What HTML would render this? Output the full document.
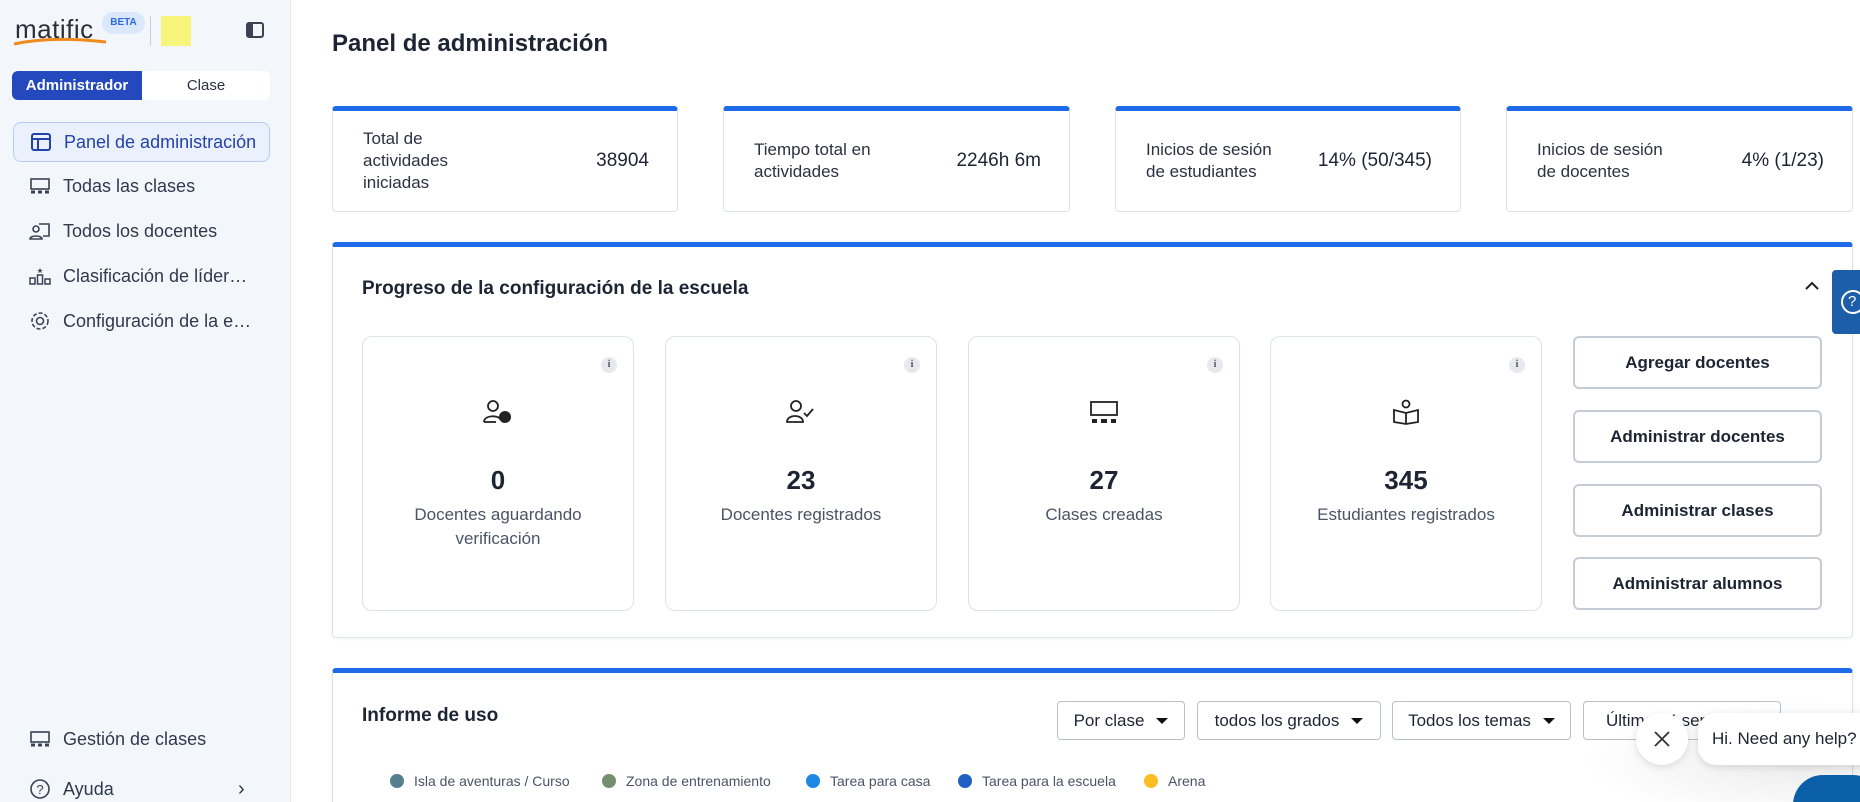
<!DOCTYPE html>
<html style="overflow:hidden;height:802px"><head><meta charset="utf-8"><style>
*{box-sizing:border-box;margin:0;padding:0}
body{width:1860px;height:802px;overflow:hidden;background:#fff;font-family:"Liberation Sans",sans-serif;color:#1d2433;position:relative}
.sb{position:absolute;left:0;top:0;width:291px;height:802px;background:#f3f6fb;border-right:1px solid #e3e7ee}
.abs{position:absolute}
.nav{position:absolute;left:13px;width:257px;height:40px;display:flex;align-items:center;font-size:18px;color:#2f3a4d}
.nav svg{position:absolute;left:16px}
.nav span{position:absolute;left:50px}
.card{position:absolute;top:106px;height:106px;border:1px solid #dde2ea;border-top:5px solid #1f6ae8;border-radius:4px;background:#fff;font-size:17px;color:#2a3140}
.card .l{position:absolute;left:30px;top:50%;transform:translateY(-50%);line-height:22px}
.card .v{position:absolute;right:28px;top:50%;transform:translateY(-50%);font-size:19px;color:#1d2433}
.panel{position:absolute;left:332px;width:1521px;border:1px solid #dde2ea;border-top:5px solid #1f6ae8;border-radius:4px;background:#fff;box-shadow:0 1px 3px rgba(0,0,0,.05)}
.ic{position:absolute;top:336px;width:272px;height:275px;border:1px solid #dde2ea;border-radius:10px;text-align:center}
.ic .n{position:absolute;top:128px;width:100%;font-size:26px;font-weight:bold}
.ic .t{position:absolute;top:166px;width:100%;font-size:17px;color:#4a5466;line-height:24px}
.ic .i{position:absolute;right:16px;top:20px;width:16px;height:16px;border-radius:50%;background:#e6e9ee;font-size:10px;line-height:16px;color:#555;font-family:"Liberation Serif",serif;font-weight:bold}
.ic svg{position:absolute;left:50%;top:62px;transform:translateX(-50%)}
.btn{position:absolute;left:1573px;width:249px;height:53px;border:2px solid #c5ccd6;border-radius:6px;display:flex;align-items:center;justify-content:center;font-weight:bold;font-size:17px;color:#1d2433}
.dd{position:absolute;top:701px;height:39px;border:1px solid #b8c0cc;border-radius:4px;display:flex;align-items:center;justify-content:center;font-size:17px;color:#1d2433}
.dd:after{content:"";border-left:6px solid transparent;border-right:6px solid transparent;border-top:6px solid #111;margin-left:12px}
.lg{position:absolute;top:773px;font-size:14px;color:#4a5466;display:flex;align-items:center}
.lg i{display:inline-block;width:14px;height:14px;border-radius:50%;margin-right:10px}
</style></head><body>
<div class="sb">
  <div class="abs" style="left:15px;top:14px;font-size:26px;color:#2a2f3a;letter-spacing:0.5px">matific</div>
  <svg class="abs" style="left:12px;top:36px" width="96" height="10"><path d="M2 8 Q40 0 94 6" stroke="#f08a1c" stroke-width="3" fill="none"/></svg>
  <div class="abs" style="left:102px;top:12px;width:43px;height:22px;border-radius:11px;background:#dbe8fb;color:#2d6be0;font-size:10px;font-weight:bold;text-align:center;line-height:22px">BETA</div>
  <div class="abs" style="left:150px;top:16px;width:1px;height:30px;background:#ccd"></div>
  <div class="abs" style="left:161px;top:16px;width:30px;height:30px;background:#f8f57c"></div>
  <svg class="abs" style="left:246px;top:22px" width="18" height="17"><rect x="1" y="1" width="16" height="14" rx="2" fill="none" stroke="#3a4254" stroke-width="2"/><rect x="2" y="2" width="5" height="12" fill="#3a4254"/></svg>
  <div class="abs" style="left:12px;top:71px;width:258px;height:29px;border-radius:6px;background:#fff;overflow:hidden">
    <div style="position:absolute;left:0;top:0;width:130px;height:29px;background:#2448bd;color:#fff;font-weight:bold;font-size:15px;text-align:center;line-height:29px">Administrador</div>
    <div style="position:absolute;left:130px;top:0;width:128px;height:29px;color:#2a3140;font-size:15px;text-align:center;line-height:29px">Clase</div>
  </div>
  <div class="nav" style="top:122px;border:1px solid #b6cdf3;border-radius:8px;background:#eaf1fc;color:#2542a8">
    <svg width="22" height="20"><rect x="2" y="2" width="18" height="16" rx="2" fill="none" stroke="#2542a8" stroke-width="2"/><path d="M2 7H20M8 7V18" stroke="#2542a8" stroke-width="2"/></svg><span>Panel de administración</span></div>
  <div class="nav" style="top:166px"><svg width="22" height="20"><rect x="2" y="3" width="18" height="10" fill="none" stroke="#3a4254" stroke-width="1.6"/><path d="M2 16h4M9 16h4M16 16h4" stroke="#3a4254" stroke-width="3"/></svg><span>Todas las clases</span></div>
  <div class="nav" style="top:211px"><svg width="22" height="20"><circle cx="7" cy="8" r="3" fill="none" stroke="#3a4254" stroke-width="1.6"/><path d="M1 18c0-4 12-4 12 0z M10 3h10v12h-6" fill="none" stroke="#3a4254" stroke-width="1.6"/></svg><span>Todos los docentes</span></div>
  <div class="nav" style="top:256px"><svg width="22" height="20"><path d="M11 2l1 2h2l-2 1 1 2-2-1-2 1 1-2-2-1h2z" fill="#3a4254"/><rect x="1" y="12" width="5" height="6" fill="none" stroke="#3a4254" stroke-width="1.5"/><rect x="8.5" y="9" width="5" height="9" fill="none" stroke="#3a4254" stroke-width="1.5"/><rect x="16" y="13" width="5" height="5" fill="none" stroke="#3a4254" stroke-width="1.5"/></svg><span>Clasificación de líder…</span></div>
  <div class="nav" style="top:301px"><svg width="22" height="22"><circle cx="11" cy="11" r="3.5" fill="none" stroke="#3a4254" stroke-width="1.6"/><circle cx="11" cy="11" r="8" fill="none" stroke="#3a4254" stroke-width="1.6" stroke-dasharray="4 2"/></svg><span>Configuración de la e…</span></div>
  <div class="nav" style="top:719px"><svg width="22" height="20"><rect x="2" y="3" width="18" height="10" fill="none" stroke="#3a4254" stroke-width="1.6"/><path d="M2 16h4M9 16h4M16 16h4" stroke="#3a4254" stroke-width="3"/></svg><span>Gestión de clases</span></div>
  <div class="nav" style="top:769px"><svg width="22" height="22"><circle cx="11" cy="11" r="9" fill="none" stroke="#3a4254" stroke-width="1.6"/><text x="11" y="16" font-size="13" text-anchor="middle" fill="#3a4254" font-family="Liberation Sans">?</text></svg><span>Ayuda</span><span style="left:225px;font-size:20px">›</span></div>
</div>

<div class="abs" style="left:332px;top:30px;font-size:24px;font-weight:bold;color:#1d2433">Panel de administración</div>

<div class="card" style="left:332px;width:346px"><div class="l">Total de<br>actividades<br>iniciadas</div><div class="v">38904</div></div>
<div class="card" style="left:723px;width:347px"><div class="l">Tiempo total en<br>actividades</div><div class="v">2246h 6m</div></div>
<div class="card" style="left:1115px;width:346px"><div class="l">Inicios de sesión<br>de estudiantes</div><div class="v">14% (50/345)</div></div>
<div class="card" style="left:1506px;width:347px"><div class="l">Inicios de sesión<br>de docentes</div><div class="v">4% (1/23)</div></div>

<div class="panel" style="top:242px;height:396px"></div>
<div class="abs" style="left:362px;top:278px;font-size:19px;font-weight:bold">Progreso de la configuración de la escuela</div>
<svg class="abs" style="left:1804px;top:281px" width="16" height="10"><path d="M2 8L8 2L14 8" stroke="#222" stroke-width="2" fill="none"/></svg>
<div class="abs" style="left:1832px;top:270px;width:28px;height:64px;background:#1d5ea8;border-radius:4px 0 0 4px;overflow:hidden"><div style="position:absolute;left:9px;top:20px;width:24px;height:24px;border:2px solid #fff;border-radius:50%;color:#fff;font-size:15px;line-height:20px;padding-left:5px">?</div></div>

<div class="ic" style="left:362px"><span class="i">i</span><svg width="30" height="26"><circle cx="10" cy="7" r="5" fill="none" stroke="#222" stroke-width="1.8"/><path d="M1 23c0-7 14-7 16-3" fill="none" stroke="#222" stroke-width="1.8"/><path d="M1 23h12" stroke="#222" stroke-width="1.8"/><circle cx="22" cy="18" r="6" fill="#222"/></svg><div class="n">0</div><div class="t">Docentes aguardando<br>verificación</div></div>
<div class="ic" style="left:665px"><span class="i">i</span><svg width="30" height="26"><circle cx="10" cy="7" r="5" fill="none" stroke="#222" stroke-width="1.8"/><path d="M1 23c0-8 16-8 16 0z" fill="none" stroke="#222" stroke-width="1.8"/><path d="M18 14l3 3 6-7" fill="none" stroke="#222" stroke-width="1.8"/></svg><div class="n">23</div><div class="t">Docentes registrados</div></div>
<div class="ic" style="left:968px"><span class="i">i</span><svg width="30" height="26"><rect x="2" y="3" width="26" height="13" fill="none" stroke="#222" stroke-width="1.8"/><path d="M3 22h5M12 22h6M22 22h5" stroke="#222" stroke-width="4"/></svg><div class="n">27</div><div class="t">Clases creadas</div></div>
<div class="ic" style="left:1270px"><span class="i">i</span><svg width="30" height="26"><circle cx="15" cy="5" r="3.5" fill="none" stroke="#222" stroke-width="1.8"/><path d="M3 11l12 3 12-3v12l-12 2-12-2z M15 14v11" fill="none" stroke="#222" stroke-width="1.8"/></svg><div class="n">345</div><div class="t">Estudiantes registrados</div></div>

<div class="btn" style="top:336px">Agregar docentes</div>
<div class="btn" style="top:410px">Administrar docentes</div>
<div class="btn" style="top:484px">Administrar clases</div>
<div class="btn" style="top:557px">Administrar alumnos</div>

<div class="panel" style="top:668px;height:134px;border-bottom:none;border-radius:4px 4px 0 0"></div>
<div class="abs" style="left:362px;top:705px;font-size:19px;font-weight:bold">Informe de uso</div>
<div class="dd" style="left:1057px;width:128px">Por clase</div>
<div class="dd" style="left:1197px;width:184px">todos los grados</div>
<div class="dd" style="left:1392px;width:179px">Todos los temas</div>
<div class="dd" style="left:1583px;width:198px;justify-content:flex-start;padding-left:22px">Últimas 4 semanas</div>
<div class="lg" style="left:390px"><i style="background:#557f8e"></i>Isla de aventuras / Curso</div>
<div class="lg" style="left:602px"><i style="background:#748f6e"></i>Zona de entrenamiento</div>
<div class="lg" style="left:806px"><i style="background:#1e88e5"></i>Tarea para casa</div>
<div class="lg" style="left:958px"><i style="background:#1f5fc4"></i>Tarea para la escuela</div>
<div class="lg" style="left:1144px"><i style="background:#fbbf24"></i>Arena</div>

<div class="abs" style="left:1580px;top:700px;width:280px;height:102px;background:radial-gradient(ellipse at 80% 60%,rgba(0,0,0,.08),rgba(0,0,0,0) 70%)"></div>
<div class="abs" style="left:1636px;top:713px;width:52px;height:52px;border-radius:50%;background:#fff;box-shadow:0 2px 8px rgba(0,0,0,.12)"><svg style="position:absolute;left:17px;top:17px" width="18" height="18"><path d="M2 2L16 16M16 2L2 16" stroke="#333" stroke-width="1.8"/></svg></div>
<div class="abs" style="left:1698px;top:713px;width:180px;height:52px;border-radius:18px;background:#fff;box-shadow:0 2px 8px rgba(0,0,0,.12);font-size:17px;line-height:52px;padding-left:14px;color:#1d2433;white-space:nowrap">Hi. Need any help?</div>
<div class="abs" style="left:1793px;top:775px;width:90px;height:60px;border-radius:30px;background:#0b5ea8"></div>
</body></html>
